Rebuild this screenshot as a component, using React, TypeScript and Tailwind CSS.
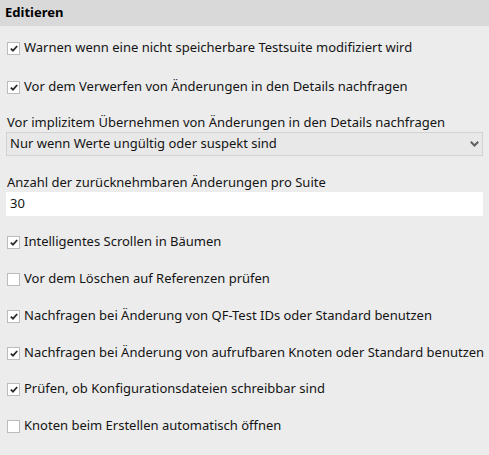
const font = { fontFamily: '"Segoe UI", "Noto Sans", "Open Sans", sans-serif' };

function Check({ checked, label, className }: { checked: boolean; label: string; className?: string }) {
  return (
    <div className={`flex h-[20px] items-center pl-[7px] ${className ?? ''}`}>
      <span className="flex h-[13px] w-[13px] items-center justify-center border border-[#bcbcbc] bg-white">
        {checked && (
          <svg width="8" height="7" viewBox="0 0 8 7">
            <path d="M0.8 3.6 L3 5.7 L7.2 1" fill="none" stroke="#2b2b2b" strokeWidth="1.8" />
          </svg>
        )}
      </span>
      <span className="ml-[4px] text-[13px] text-[#141414]">{label}</span>
    </div>
  );
}

export default function App() {
  return (
    <div className="h-[455px] w-[489px] bg-[#ececec]" style={font}>
      <div className="flex h-[26px] items-center bg-[#d9d9d9] pl-[5px] text-[13px] font-bold text-black">
        Editieren
      </div>

      <Check checked label="Warnen wenn eine nicht speicherbare Testsuite modifiziert wird" className="mt-[12px]" />
      <Check checked label="Vor dem Verwerfen von Änderungen in den Details nachfragen" className="mt-[19px]" />

      <div className="mt-[18px] flex h-[16px] items-center pl-[7px] text-[13px] text-[#141414]">
        Vor implizitem Übernehmen von Änderungen in den Details nachfragen
      </div>
      <div className="mx-[6px] mt-[1px] flex h-[24px] items-center justify-between border border-[#d2d2d2] bg-[#e8e8e8] pl-[3px] pr-[3px] text-[13px] text-[#141414]">
        <span>Nur wenn Werte ungültig oder suspekt sind</span>
        <svg width="9" height="6" viewBox="0 0 9 6">
          <path d="M0.8 0.8 L4.5 4.5 L8.2 0.8" fill="none" stroke="#606060" strokeWidth="2" />
        </svg>
      </div>

      <div className="mt-[19px] flex h-[16px] items-center pl-[7px] text-[13px] text-[#141414]">
        Anzahl der zurücknehmbaren Änderungen pro Suite
      </div>
      <div className="mx-[6px] mt-[1px] flex h-[24px] items-center bg-white pl-[4px] text-[13px] text-[#141414]">
        30
      </div>

      <Check checked label="Intelligentes Scrollen in Bäumen" className="mt-[16px]" />
      <Check checked={false} label="Vor dem Löschen auf Referenzen prüfen" className="mt-[17px]" />
      <Check checked label="Nachfragen bei Änderung von QF-Test IDs oder Standard benutzen" className="mt-[17px]" />
      <Check checked label="Nachfragen bei Änderung von aufrufbaren Knoten oder Standard benutzen" className="mt-[17px]" />
      <Check checked label="Prüfen, ob Konfigurationsdateien schreibbar sind" className="mt-[16px]" />
      <Check checked={false} label="Knoten beim Erstellen automatisch öffnen" className="mt-[17px]" />
    </div>
  );
}
